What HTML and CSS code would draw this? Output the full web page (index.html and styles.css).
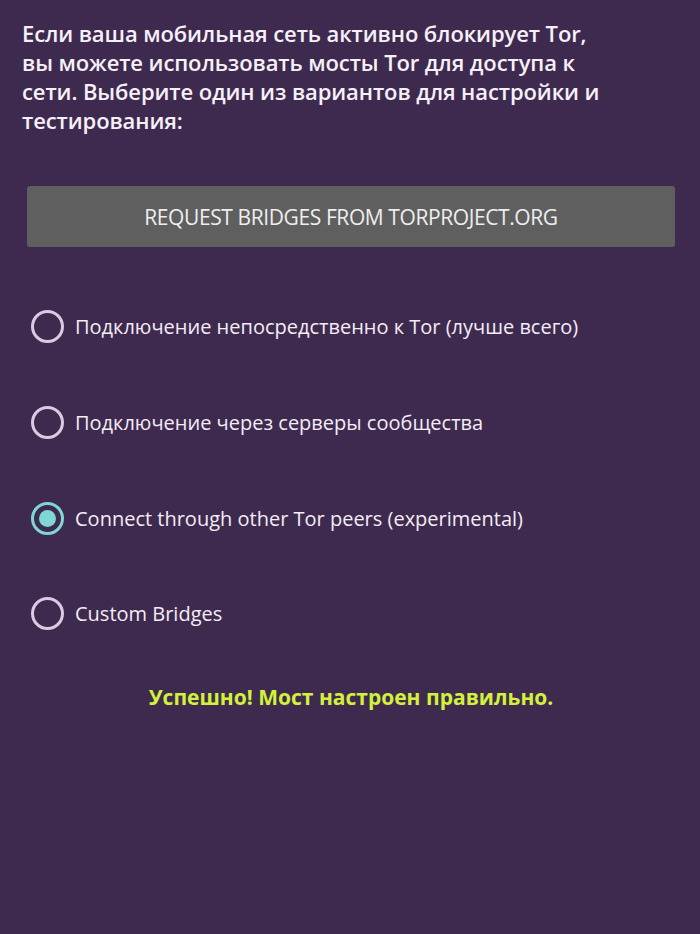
FILE: index.html
```html
<!DOCTYPE html>
<html lang="ru">
<head>
  <meta charset="UTF-8">
  <meta name="viewport" content="width=device-width, initial-scale=1.0">
  <title>Tor Bridges</title>
  <link rel="stylesheet" href="styles.css">
</head>
<body>
  <div class="screen">
    <p class="intro">Если ваша мобильная сеть активно блокирует Tor,<br>
      вы можете использовать мосты Tor для доступа к<br>
      сети. Выберите один из вариантов для настройки и<br>
      тестирования:</p>

    <button class="request-btn">REQUEST BRIDGES FROM TORPROJECT.ORG</button>

    <div class="options">
      <label class="option">
        <span class="radio"></span>
        <span class="option-text">Подключение непосредственно к Tor (лучше всего)</span>
      </label>
      <label class="option">
        <span class="radio"></span>
        <span class="option-text">Подключение через серверы сообщества</span>
      </label>
      <label class="option">
        <span class="radio checked"></span>
        <span class="option-text">Connect through other Tor peers (experimental)</span>
      </label>
      <label class="option">
        <span class="radio"></span>
        <span class="option-text">Custom Bridges</span>
      </label>
    </div>

    <div class="status">Успешно! Мост настроен правильно.</div>
  </div>
</body>
</html>
```

FILE: styles.css
```css
body, html {
  margin: 0;
  padding: 0;
  height: 100%;
  background: #3f2a4f;
  font-family: "Open Sans", "Noto Sans", sans-serif;
}

.screen {
  padding: 19px 20px 0 22px;
  color: #f4eef6;
}

.intro {
  margin: 0;
  font-size: 22px;
  font-weight: 600;
  line-height: 29px;
  white-space: nowrap;
  letter-spacing: -0.1px;
  color: #f6f1f8;
}

.request-btn {
  display: block;
  width: 648px;
  height: 61px;
  margin: 51px 0 0 5px;
  background: #5f5f5f;
  border: none;
  border-radius: 3px;
  color: #eeeeee;
  font-family: "Open Sans", "Noto Sans", sans-serif;
  font-size: 21px;
  letter-spacing: -0.4px;
}

.options {
  margin-top: 32px;
  display: flex;
  flex-direction: column;
}

.option {
  display: flex;
  align-items: center;
  height: 95.7px;
  gap: 11px;
  padding-left: 9px;
}

.radio {
  width: 27px;
  height: 27px;
  border: 3px solid #d8cbe2;
  border-radius: 50%;
  flex-shrink: 0;
  position: relative;
}

.radio.checked {
  border-color: #7fd6d2;
}

.radio.checked::after {
  content: "";
  position: absolute;
  left: 5px;
  top: 5px;
  width: 17px;
  height: 17px;
  border-radius: 50%;
  background: #7fd6d2;
}

.option-text {
  font-size: 20px;
  color: #f3edf5;
}

.status {
  margin-top: 21px;
  text-align: center;
  font-size: 21px;
  font-weight: 700;
  color: #d2f13c;
}
```
